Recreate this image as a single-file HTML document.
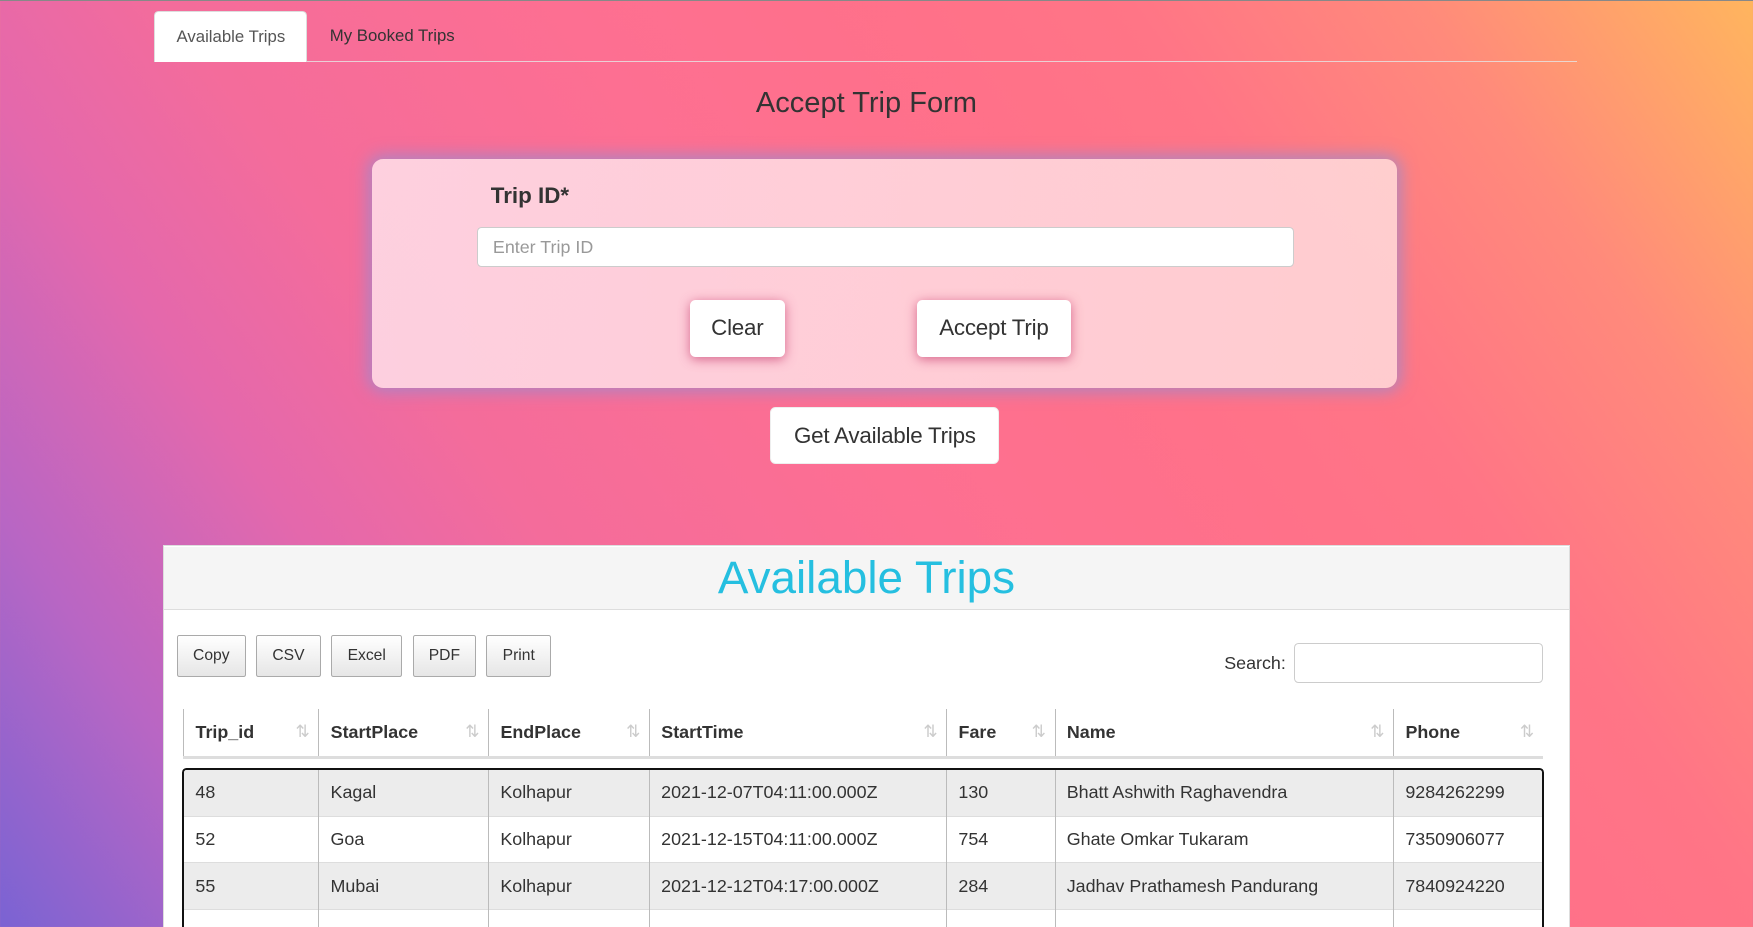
<!DOCTYPE html>
<html><head><meta charset="utf-8"><style>
html,body{margin:0;padding:0;overflow:hidden}
body{width:1568px;height:829px;zoom:1.118;font-family:"Liberation Sans",Arial,sans-serif;position:relative;
background:linear-gradient(55deg,#7a63d3 0%,#b866c4 12%,#e468ac 24%,#f46c9b 34%,#fd6f92 50%,#ff7189 65%,#ff7586 74%,#ff8a7b 86%,#ffb55e 100%);border-top:1px solid #888;box-sizing:border-box}
.abs{position:absolute}
.tab{top:9px;height:46px;line-height:44px;font-size:15px;box-sizing:border-box}
.btn{background:#fff;border-radius:5px;text-align:center;font-size:20px;color:#333;box-sizing:border-box;letter-spacing:-0.2px}
.dt{top:567px;height:38px;line-height:36px;font-size:14px;color:#333;border:1px solid #aaa;border-radius:2px;background:linear-gradient(#fff,#e6e6e6);text-align:center;box-sizing:border-box}
table{border-collapse:collapse;position:absolute;left:164px;width:1216px;font-size:16px;color:#333;table-layout:fixed}
th{text-align:left;height:42px;padding:0 10px;border-left:1px solid #bbb;position:relative}
th:after{content:"⇅";position:absolute;right:8px;top:11px;color:#ccc;font-weight:normal;font-size:15px}
td{height:41px;padding:0 10px;border-left:1px solid #bbb;border-top:1px solid #ddd;white-space:nowrap}
tr.o td{background:#ececec}
</style></head><body>
<div class="abs" style="left:138px;top:54px;width:1273px;height:1px;background:rgba(230,230,230,.8)"></div>
<div class="abs tab" style="left:138px;width:137px;background:#fff;border:1px solid #ddd;border-bottom:none;border-radius:4px 4px 0 0;text-align:center;color:#555">Available Trips</div>
<div class="abs tab" style="left:295px;color:#333">My Booked Trips</div>
<div class="abs" style="left:0;width:1550px;top:77px;text-align:center;font-size:26px;color:#333">Accept Trip Form</div>
<div class="abs" style="left:333px;top:141px;width:917px;height:205px;border-radius:10px;background:linear-gradient(100deg,rgba(255,225,235,.85),rgba(255,225,225,.8));box-shadow:0 0 14px 4px rgba(150,140,210,.7)"></div>
<div class="abs" style="left:439px;top:163px;font-size:20px;font-weight:bold;color:#333">Trip ID*</div>
<div class="abs" style="left:427px;top:202px;width:730px;height:36px;background:#fff;border:1px solid #ccc;border-radius:4px;box-sizing:border-box;font-size:16px;color:#999;line-height:34px;padding-left:13px">Enter Trip ID</div>
<div class="abs btn" style="left:617px;top:267px;width:85px;height:51px;line-height:50px;box-shadow:0 2px 10px rgba(200,60,110,.7)">Clear</div>
<div class="abs btn" style="left:820px;top:267px;width:138px;height:51px;line-height:50px;box-shadow:0 2px 10px rgba(200,60,110,.7)">Accept Trip</div>
<div class="abs btn" style="left:689px;top:363px;width:205px;height:51px;line-height:50px;border:1px solid #eee">Get Available Trips</div>
<div class="abs" style="left:146px;top:487px;width:1258px;height:342px;background:#fff;border:1px solid #ddd;box-sizing:border-box"></div>
<div class="abs" style="left:147px;top:488px;width:1256px;height:56px;background:#f5f5f5;border-bottom:1px solid #ddd;text-align:center;font-size:41px;line-height:56px;color:#25bfe0">Available Trips</div>
<div class="abs dt" style="left:158px;width:62px">Copy</div>
<div class="abs dt" style="left:229px;width:58px">CSV</div>
<div class="abs dt" style="left:296px;width:64px">Excel</div>
<div class="abs dt" style="left:369px;width:57px">PDF</div>
<div class="abs dt" style="left:435px;width:58px">Print</div>
<div class="abs" style="left:1095px;top:583px;font-size:16px;color:#333">Search:</div>
<div class="abs" style="left:1157px;top:574px;width:223px;height:36px;border:1px solid #ccc;border-radius:4px;box-sizing:border-box;background:#fff"></div>
<table style="top:633px">
<tr style="border-bottom:3px solid #ddd"><th style="width:100px">Trip_id</th><th style="width:131px">StartPlace</th><th style="width:123px">EndPlace</th><th style="width:245px">StartTime</th><th style="width:76px">Fare</th><th style="width:282px">Name</th><th>Phone</th></tr>
</table>
<div class="abs" style="left:163px;top:686px;width:1218px;height:160px;border:2px solid #111;border-radius:4px;box-sizing:border-box;overflow:hidden">
<table style="left:0;top:-1px;width:1216px">
<tr class="o"><td style="width:100px;border-left:none">48</td><td style="width:131px">Kagal</td><td style="width:123px">Kolhapur</td><td style="width:245px">2021-12-07T04:11:00.000Z</td><td style="width:76px">130</td><td style="width:282px">Bhatt Ashwith Raghavendra</td><td>9284262299</td></tr>
<tr><td style="border-left:none">52</td><td>Goa</td><td>Kolhapur</td><td>2021-12-15T04:11:00.000Z</td><td>754</td><td>Ghate Omkar Tukaram</td><td>7350906077</td></tr>
<tr class="o"><td style="border-left:none">55</td><td>Mubai</td><td>Kolhapur</td><td>2021-12-12T04:17:00.000Z</td><td>284</td><td>Jadhav Prathamesh Pandurang</td><td>7840924220</td></tr>
<tr><td style="border-left:none">&nbsp;</td><td></td><td></td><td></td><td></td><td></td><td></td></tr>
</table></div>
</body></html>
